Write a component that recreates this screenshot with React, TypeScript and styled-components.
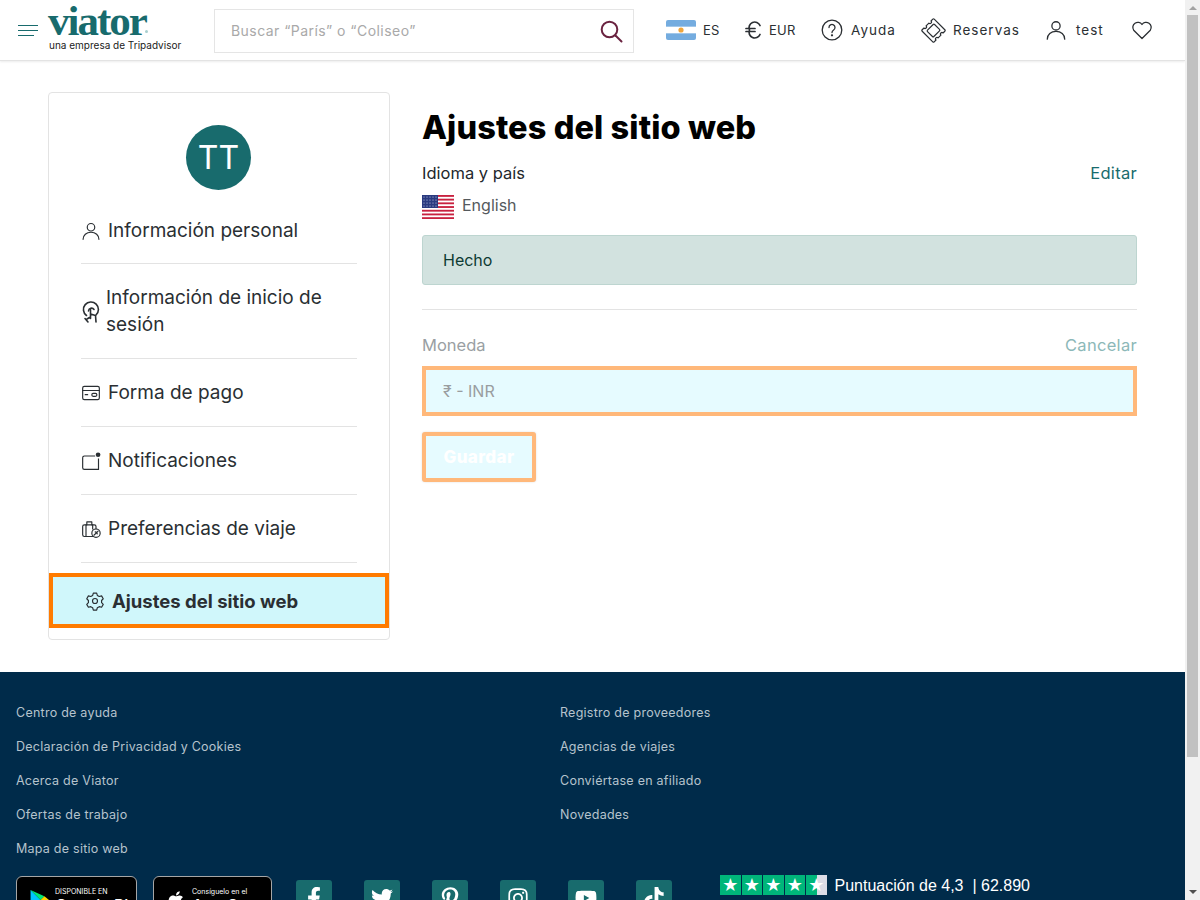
import type { ReactNode } from "react";
import { createGlobalStyle, styled } from "styled-components";
import { FaApple, FaFacebookF, FaInstagram, FaPinterestP, FaTiktok, FaTwitter, FaYoutube } from "react-icons/fa";

const FONT = `Inter, "Noto Sans", "Liberation Sans", sans-serif`;

const GlobalStyle = createGlobalStyle`
  html { scrollbar-width: none; }
  body {
    margin: 0;
    width: 1185px;
    background: #ffffff;
    font-family: ${FONT};
    color: #22272b;
  }
  * { box-sizing: border-box; }
  svg { flex: none; }
`;

const Line = ({ children, size = 20 }: { children: ReactNode; size?: number }) => (
  <svg width={size} height={size} viewBox="0 0 24 24" fill="none" stroke="currentColor" strokeWidth="1.4" strokeLinecap="round" strokeLinejoin="round">
    {children}
  </svg>
);

const PersonIcon = ({ size = 20 }: { size?: number }) => (
  <Line size={size}>
    <circle cx="12" cy="7.5" r="4.5" />
    <path d="M2.5 22c0-5 4-8.500 9.500-8.500s9.500 3.500 9.500 8.500" />
  </Line>
);

const LoginIcon = () => (
  <svg width="20" height="24" viewBox="0 0 20 24" fill="none" stroke="currentColor" strokeWidth="1.6" strokeLinecap="round" strokeLinejoin="round">
    <path d="M5.500 15.500A7.500 7.500 0 1 1 15 15" />
    <path d="M7.500 11A3 3 0 0 1 13 9.500" />
    <path d="M9.500 9.500v9l-1-1-2.500 1.500M9.500 14l5 1.500.5 6.500M4 18.500l3 3.500" />
  </svg>
);

const CardIcon = () => (
  <Line>
    <rect x="2" y="4" width="20" height="16" rx="2" />
    <path d="M2 9h20M5 14h3" />
    <rect x="13" y="12.500" width="6" height="3.500" rx="1.500" />
  </Line>
);

const BellBoxIcon = () => (
  <svg width="20" height="20" viewBox="0 0 24 24" fill="none" stroke="currentColor" strokeWidth="1.4">
    <path d="M17 6H4a2 2 0 0 0-2 2v12a2 2 0 0 0 2 2h17v-13" />
    <circle cx="20.500" cy="4.500" r="2.800" fill="currentColor" stroke="none" />
  </svg>
);

const LuggageIcon = () => (
  <Line>
    <rect x="2" y="7" width="16" height="14" rx="2" />
    <path d="M7 7V3.500h6V7M6 7v14M14 7v5" />
    <circle cx="18" cy="17" r="5" fill="#fff" />
    <path d="M15.500 19.500l5-5M17 15.500l2 .5.500 2" />
  </Line>
);

const GearIcon = () => (
  <Line>
    <circle cx="12" cy="12" r="3" />
    <path d="M10 2.500h4l.8 2.800 2.300 1.300 2.800-.7 2 3.400-2 2.100v2.600l2 2.100-2 3.400-2.800-.7-2.300 1.300-.8 2.800h-4l-.8-2.800-2.300-1.300-2.800.7-2-3.400 2-2.100v-2.600l-2-2.100 2-3.400 2.800.7 2.300-1.300z" />
  </Line>
);

const TicketIcon = () => (
  <svg width="25" height="25" viewBox="0 0 25 25" fill="none" stroke="currentColor" strokeWidth="1.2" strokeLinejoin="round">
    <g transform="rotate(45 12.500 12.500)">
      <path d="M5 4h15a1 1 0 0 1 1 1v2.500a1.500 1.500 0 0 0 0 3v4a1.500 1.500 0 0 0 0 3V20a1 1 0 0 1-1 1H5a1 1 0 0 1-1-1v-2.500a1.500 1.500 0 0 0 0-3v-4a1.500 1.500 0 0 0 0-3V5a1 1 0 0 1 1-1z" />
      <rect x="8" y="7.500" width="9" height="10" rx="1" />
    </g>
  </svg>
);

const navItems = [
  { label: "Información personal", icon: <PersonIcon />, height: 67 },
  { label: "Información de inicio de sesión", icon: <LoginIcon />, height: 95, tight: true },
  { label: "Forma de pago", icon: <CardIcon />, height: 68 },
  { label: "Notificaciones", icon: <BellBoxIcon />, height: 68 },
  { label: "Preferencias de viaje", icon: <LuggageIcon />, height: 68 },
];

const footerLeft = ["Centro de ayuda", "Declaración de Privacidad y Cookies", "Acerca de Viator", "Ofertas de trabajo", "Mapa de sitio web"];
const footerRight = ["Registro de proveedores", "Agencias de viajes", "Conviértase en afiliado", "Novedades"];
const socials = [<FaFacebookF />, <FaTwitter />, <FaPinterestP />, <FaInstagram />, <FaYoutube />, <FaTiktok />];
const flagDots = [2, 5, 8, 11, 14].flatMap((x) => [2, 5, 8, 11].map((y) => ({ x, y })));

const App = () => {
  return (
    <>
      <GlobalStyle />
      <SScrollbar>
        <SArrowUp />
        <SThumb />
        <SArrowDown />
      </SScrollbar>
      <SHeader>
        <SMenuButton aria-label="menu">
          <i />
          <i />
          <i />
        </SMenuButton>
        <SLogoBlock>
          <SLogoWord>
            viator<SLogoDot />
          </SLogoWord>
          <SLogoTag>una empresa de Tripadvisor</SLogoTag>
        </SLogoBlock>
        <SSearch>
          <SSearchText>Buscar “París” o “Coliseo”</SSearchText>
          <SSearchIcon width="24" height="24" viewBox="0 0 24 24" fill="none" stroke="currentColor" strokeWidth="2" strokeLinecap="round">
            <circle cx="10.500" cy="10.500" r="7.800" />
            <path d="M16.500 16.500l6 6" />
          </SSearchIcon>
        </SSearch>
        <STopNav>
          <STopItem $gap={7} $width={53} $caps>
            <svg width="30" height="20" viewBox="0 0 30 20">
              <rect width="30" height="20" rx="2" fill="#74acdf" />
              <rect y="6.670" width="30" height="6.660" fill="#ffffff" />
              <circle cx="15" cy="10" r="2.600" fill="#f0a63c" />
            </svg>
            <span>ES</span>
          </STopItem>
          <STopItem $gap={7} $width={50} $ml={26} $caps>
            <svg width="17" height="20" viewBox="0 0 17 20" fill="none" stroke="currentColor" strokeWidth="1.700" strokeLinecap="round">
              <path d="M15 5.500A5.500 5.500 0 0 0 4.500 10 5.500 5.500 0 0 0 15 14.500M1 8.500h9M1 11.500h9" />
            </svg>
            <span>EUR</span>
          </STopItem>
          <STopItem $gap={8} $width={76} $ml={26}>
            <svg width="22" height="22" viewBox="0 0 22 22" fill="none" stroke="currentColor" strokeWidth="1.300" strokeLinecap="round">
              <circle cx="11" cy="11" r="9.800" />
              <path d="M8 8.500a3 3 0 1 1 4.600 2.500c-1 .7-1.600 1.300-1.600 2.500" />
              <circle cx="11" cy="16.300" r=".5" fill="currentColor" />
            </svg>
            <span>Ayuda</span>
          </STopItem>
          <STopItem $gap={7} $width={98} $ml={24}>
            <TicketIcon />
            <span>Reservas</span>
          </STopItem>
          <STopItem $gap={9} $width={60} $ml={26}>
            <PersonIcon size={22} />
            <span>test</span>
          </STopItem>
          <STopItem $gap={0} $width={22} $ml={26}>
            <svg width="22" height="20" viewBox="0 0 22 20" fill="none" stroke="currentColor" strokeWidth="1.300" strokeLinejoin="round">
              <path d="M11 18.500L2.700 10.200A5 5 0 0 1 11 4.500a5 5 0 0 1 8.300 5.700z" />
            </svg>
          </STopItem>
        </STopNav>
      </SHeader>

      <SContent>
        <SSidebar>
          <SAvatar>TT</SAvatar>
          <SNavList>
            {navItems.map((item) => (
              <SNavRow key={item.label} $height={item.height}>
                <SNavIcon $tight={item.tight}>{item.icon}</SNavIcon>
                <SNavLabel>{item.label}</SNavLabel>
              </SNavRow>
            ))}
          </SNavList>
          <SActiveRow>
            <GearIcon />
            <span>Ajustes del sitio web</span>
          </SActiveRow>
        </SSidebar>

        <SMain>
          <STitle>Ajustes del sitio web</STitle>
          <SFieldHead>
            <SFieldLabel>Idioma y país</SFieldLabel>
            <SAction>Editar</SAction>
          </SFieldHead>
          <SLanguage>
            <svg width="32" height="24" viewBox="0 0 32 24">
              <rect width="32" height="24" rx="2" fill="#ffffff" />
              {[0, 1, 2, 3, 4, 5, 6].map((n) => (
                <rect key={n} y={n * 3.700} width="32" height="1.850" fill="#c8213f" />
              ))}
              <rect width="16" height="13" fill="#2a3a80" />
              {flagDots.map((d) => (
                <circle key={`${d.x}-${d.y}`} cx={d.x} cy={d.y} r=".55" fill="#cfd5ea" />
              ))}
            </svg>
            <span>English</span>
          </SLanguage>
          <SNotice>Hecho</SNotice>
          <SDivider />
          <SFieldHead $muted>
            <SFieldLabel $muted>Moneda</SFieldLabel>
            <SAction $muted>Cancelar</SAction>
          </SFieldHead>
          <SCurrency>₹ - INR</SCurrency>
          <SSave>Guardar</SSave>
        </SMain>
      </SContent>

      <SFooter>
        <SLinkColumns>
          <SLinkList>
            {footerLeft.map((link) => (
              <li key={link}>{link}</li>
            ))}
          </SLinkList>
          <SLinkList>
            {footerRight.map((link) => (
              <li key={link}>{link}</li>
            ))}
          </SLinkList>
        </SLinkColumns>
        <SFooterBottom>
          <SBadge $width={121}>
            <svg width="20" height="26" viewBox="0 0 26 28">
              <path d="M2 1v26l13-13z" fill="#00c3ff" />
              <path d="M2 1l13 13 5-5z" fill="#00e676" />
              <path d="M2 27l13-13 5 5z" fill="#ff3a44" />
              <path d="M20 9l-5 5 5 5 6-5z" fill="#ffd400" />
            </svg>
            <SBadgeText>
              <small>DISPONIBLE EN</small>
              <b>Google Play</b>
            </SBadgeText>
          </SBadge>
          <SBadge $width={119}>
            <FaApple size={20} color="#ffffff" />
            <SBadgeText>
              <small>Consíguelo en el</small>
              <b>App Store</b>
            </SBadgeText>
          </SBadge>
          <SSocials>
            {socials.map((icon, i) => (
              <SSocial key={i}>{icon}</SSocial>
            ))}
          </SSocials>
          <STrust>
            <STrustRow>
              <SStars>
                {[0, 1, 2, 3, 4].map((n) => (
                  <SStar key={n} $half={n === 4}>★</SStar>
                ))}
              </SStars>
              <STrustText>Puntuación de 4,3&nbsp; | 62.890</STrustText>
            </STrustRow>
            <STrustBrand>
              <i>★</i> Trustpilot
            </STrustBrand>
          </STrust>
        </SFooterBottom>
      </SFooter>
    </>
  );
};

const SScrollbar = styled.div`
  position: fixed;
  top: 0;
  right: 0;
  bottom: 0;
  display: flex;
  flex-direction: column;
  align-items: center;
  width: 15px;
  background: #f1f1f1;
`;

const SArrowUp = styled.div`
  width: 0;
  height: 0;
  margin-top: 6px;
  border: 4px solid transparent;
  border-top: 0;
  border-bottom: 4px solid #a3a3a3;
`;

const SThumb = styled.div`
  width: 11px;
  height: 742px;
  margin-top: 5px;
  background: #c1c1c1;
`;

const SArrowDown = styled.div`
  width: 0;
  height: 0;
  margin-top: auto;
  margin-bottom: 6px;
  border: 4px solid transparent;
  border-bottom: 0;
  border-top: 4px solid #505050;
`;

const SHeader = styled.header`
  display: flex;
  align-items: center;
  height: 61px;
  padding-left: 18px;
  background: #ffffff;
  border-bottom: 1px solid #e3e3e3;
  box-shadow: 0 1px 2px rgba(0, 0, 0, 0.08);
`;

const SMenuButton = styled.div`
  display: flex;
  flex-direction: column;
  gap: 3.5px;
  width: 30px;
  margin-top: 1px;

  i {
    display: block;
    width: 20px;
    height: 1.5px;
    background: #186b6d;
  }
  i:last-child {
    width: 16px;
  }
`;

const SLogoBlock = styled.div`
  display: flex;
  flex-direction: column;
  width: 166px;
`;

const SLogoWord = styled.div`
  position: relative;
  width: fit-content;
  height: 30px;
  font-family: "Liberation Serif", serif;
  font-size: 43px;
  font-weight: 700;
  line-height: 26px;
  letter-spacing: -2px;
  color: #186b6d;
`;

const SLogoDot = styled.span`
  position: absolute;
  right: -2px;
  bottom: 5px;
  width: 3px;
  height: 3px;
  border-radius: 50%;
  background: #a9cfcf;
`;

const SLogoTag = styled.div`
  margin-left: 1px;
  font-size: 10px;
  line-height: 14px;
  white-space: nowrap;
  color: #1a1a1a;
`;

const SSearch = styled.div`
  display: flex;
  align-items: center;
  justify-content: space-between;
  width: 420px;
  height: 44px;
  margin-top: 1px;
  padding: 0 10px 0 16px;
  border: 1px solid #e5e5e5;
`;

const SSearchText = styled.span`
  font-size: 14px;
  letter-spacing: 0.45px;
  color: #a9a9a9;
`;

const SSearchIcon = styled.svg`
  color: #6a2340;
`;

const STopNav = styled.nav`
  display: flex;
  align-items: center;
  margin-left: 32px;
`;

const STopItem = styled.div<{ $gap: number; $width: number; $ml?: number; $caps?: boolean }>`
  display: flex;
  align-items: center;
  gap: ${(p) => p.$gap}px;
  width: ${(p) => p.$width}px;
  margin-left: ${(p) => p.$ml ?? 0}px;
  font-size: ${(p) => (p.$caps ? 13 : 13.5)}px;
  letter-spacing: ${(p) => (p.$caps ? 0.3 : 1)}px;
  color: #2b2f33;
  white-space: nowrap;
`;

const SContent = styled.main`
  display: flex;
  align-items: flex-start;
  gap: 32px;
  padding: 31px 48px 32px;
`;

const SSidebar = styled.aside`
  display: flex;
  flex-direction: column;
  align-items: center;
  flex: 0 0 342px;
  height: 548px;
  padding-top: 32px;
  border: 1px solid #e3e3e3;
  border-radius: 4px;
`;

const SAvatar = styled.div`
  display: flex;
  align-items: center;
  justify-content: center;
  width: 65px;
  height: 65px;
  margin-right: 1px;
  border-radius: 50%;
  background: #186b6d;
  color: #ffffff;
  font-size: 32px;
`;

const SNavList = styled.ul`
  width: 276px;
  margin: 7px 0 0;
  padding: 0;
  list-style: none;
`;

const SNavRow = styled.li<{ $height: number }>`
  display: flex;
  align-items: center;
  height: ${(p) => p.$height}px;
  border-bottom: 1px solid #e3e3e3;
`;

const SNavIcon = styled.span<{ $tight?: boolean }>`
  display: flex;
  flex: none;
  margin-right: ${(p) => (p.$tight ? 5 : 7)}px;
  margin-top: 1px;
  color: #2a2f33;
`;

const SNavLabel = styled.span`
  font-size: 19px;
  line-height: 27px;
  color: #2a2f33;
`;

const SActiveRow = styled.div`
  display: flex;
  align-items: center;
  gap: 7px;
  width: 340px;
  height: 55px;
  margin-top: 10px;
  padding-left: 32px;
  border: 4px solid #ff7b00;
  background: #d0f7fb;
  font-size: 18.5px;
  font-weight: 700;
  color: #2a2f33;
`;

const SMain = styled.section`
  flex: 1;
  min-width: 0;
`;

const STitle = styled.h1`
  margin: 14px 0 11px;
  font-size: 32.5px;
  line-height: 44px;
  font-weight: 800;
  letter-spacing: 0.1px;
  color: #000000;
`;

const SFieldHead = styled.div<{ $muted?: boolean }>`
  display: flex;
  justify-content: space-between;
  align-items: center;
  height: 24px;
`;

const SFieldLabel = styled.span<{ $muted?: boolean }>`
  font-size: 16.5px;
  color: ${(p) => (p.$muted ? "#9a9fa3" : "#22272b")};
`;

const SAction = styled.span<{ $muted?: boolean }>`
  font-size: 16.5px;
  letter-spacing: 0.3px;
  color: ${(p) => (p.$muted ? "#8cb8b8" : "#186b6d")};
`;

const SLanguage = styled.div`
  display: flex;
  align-items: flex-start;
  gap: 8px;
  height: 24px;
  margin-top: 10px;
  font-size: 16px;
  line-height: 20px;
  color: #55595d;
`;

const SNotice = styled.div`
  display: flex;
  align-items: center;
  height: 50px;
  margin-top: 16px;
  padding-left: 20px;
  border: 1px solid #bdd5d0;
  border-radius: 3px;
  background: #d2e2df;
  font-size: 16px;
  color: #0d3b33;
`;

const SDivider = styled.hr`
  height: 1px;
  margin: 24px 0 23px;
  border: 0;
  background: #e3e3e3;
`;

const SCurrency = styled.div`
  display: flex;
  align-items: center;
  height: 50px;
  margin-top: 9px;
  padding-left: 17px;
  border: 4px solid #ffb87a;
  background: #e6fbff;
  font-size: 16px;
  color: #999da0;
`;

const SSave = styled.button`
  display: block;
  width: 114px;
  height: 50px;
  margin-top: 16px;
  padding: 0;
  border: 4px solid #ffb87a;
  border-radius: 3px;
  background: #e6fbff;
  box-shadow: 0 0 2px rgba(0, 0, 0, 0.15);
  color: #ffffff;
  font-family: ${FONT};
  font-size: 17px;
  font-weight: 800;
  letter-spacing: 0.4px;
`;

const SFooter = styled.footer`
  padding: 24px 16px 48px;
  background: #002b4a;
  color: #b6c3cd;
`;

const SLinkColumns = styled.div`
  display: grid;
  grid-template-columns: 544px 1fr;
`;

const SLinkList = styled.ul`
  margin: 0;
  padding: 0;
  list-style: none;

  li {
    height: 34px;
    font-size: 12.5px;
    letter-spacing: 0.25px;
    line-height: 34px;
  }
`;

const SFooterBottom = styled.div`
  display: flex;
  align-items: flex-start;
  gap: 16px;
  margin-top: 10px;
`;

const SBadge = styled.div<{ $width: number }>`
  display: flex;
  align-items: center;
  gap: 6px;
  width: ${(p) => p.$width}px;
  height: 44px;
  padding: 4px 0 0 12px;
  border: 1px solid #a6a6a6;
  border-radius: 6px;
  background: #000000;
`;

const SBadgeText = styled.div`
  display: flex;
  flex-direction: column;
  color: #ffffff;

  small {
    font-size: 7px;
    line-height: 10px;
    white-space: nowrap;
  }
  b {
    font-size: 16px;
    font-weight: 500;
    line-height: 16px;
    white-space: nowrap;
  }
`;

const SSocials = styled.div`
  display: flex;
  gap: 32px;
  margin: 4px 0 0 8px;
`;

const SSocial = styled.div`
  display: flex;
  align-items: center;
  justify-content: center;
  width: 36px;
  height: 36px;
  border-radius: 3px;
  background: #186b6d;
  color: #ffffff;
  font-size: 22px;
`;

const STrust = styled.div`
  margin: -2px 0 0 32px;
`;

const STrustRow = styled.div`
  display: flex;
  align-items: center;
  gap: 8px;
`;

const SStars = styled.div`
  display: flex;
  gap: 1px;
`;

const SStar = styled.span<{ $half?: boolean }>`
  display: flex;
  align-items: center;
  justify-content: center;
  width: 20.5px;
  height: 20px;
  background: ${(p) => (p.$half ? "linear-gradient(90deg, #00b67a 50%, #dcdce6 50%)" : "#00b67a")};
  color: #ffffff;
  font-family: "DejaVu Sans", sans-serif;
  font-size: 18px;
  line-height: 20px;
`;

const STrustText = styled.span`
  margin-top: 3px;
  font-family: "Liberation Sans", sans-serif;
  font-size: 16px;
  color: #ffffff;
`;

const STrustBrand = styled.div`
  margin: 4px 0 0 76px;
  font-family: "Liberation Sans", sans-serif;
  font-size: 16px;
  font-weight: 700;
  line-height: 26px;
  color: #ffffff;

  i {
    font-family: "DejaVu Sans", sans-serif;
    font-size: 24px;
    font-style: normal;
    color: #00b67a;
  }
`;

export default App;
